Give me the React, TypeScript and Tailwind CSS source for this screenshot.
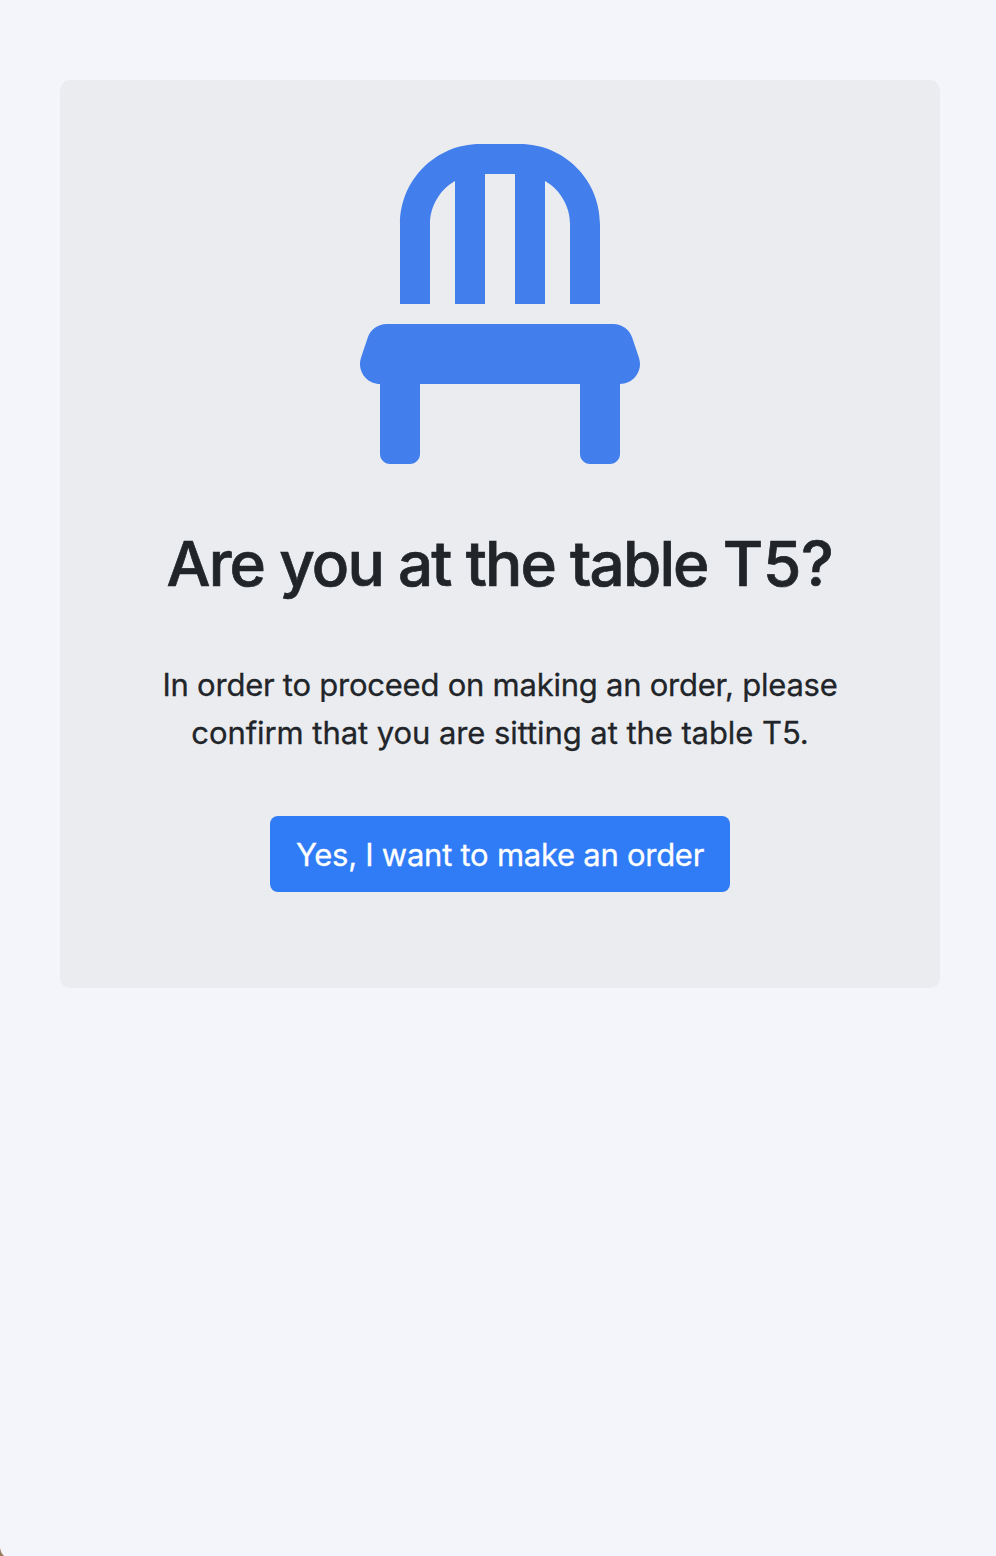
import { FaChair } from "react-icons/fa";

export default function App() {
  return (
    <main className="relative h-[1556px] w-full overflow-hidden bg-[#f4f5fa] px-[60px] pt-20 font-['Inter',sans-serif] text-[#212529]">
      <section className="flex h-[908px] w-[880px] flex-col items-center rounded-[10px] bg-[#ebecf0] pt-16 text-center">
        <FaChair className="h-[320px] w-[280px] shrink-0 text-[#427fed]" />
        <h1 className="mt-[61px] text-[62px] leading-[77px] font-medium tracking-[-1.88px] whitespace-nowrap [-webkit-text-stroke:0.7px_#212529] [word-spacing:0.5px]">
          Are you at the table <span className="tracking-[-0.3px]">T5?</span>
        </h1>
        <p className="mt-[59px] text-[31px] leading-[48px] whitespace-nowrap [-webkit-text-stroke:0.3px_#212529]">
          <span className="tracking-[-0.24px]">In order to proceed on making an order, please</span>
          <br />
          <span className="tracking-[-0.07px]">confirm that you are sitting at the table T5.</span>
        </p>
        <button className="mt-[59px] flex h-[76px] w-[460px] items-center justify-center rounded-[8px] bg-[#307cf6] pt-[2px] text-[31px] tracking-[-0.26px] whitespace-nowrap text-white [-webkit-text-stroke:0.3px_#ffffff]">
          Yes, I want to make an order
        </button>
      </section>
      <svg className="absolute bottom-0 left-0 h-2 w-1" viewBox="0 0 4 8" fill="#9a7b5c" aria-hidden="true">
        <path d="M0 0C.6 3 1.8 6 4 8H0Z" />
      </svg>
    </main>
  );
}
